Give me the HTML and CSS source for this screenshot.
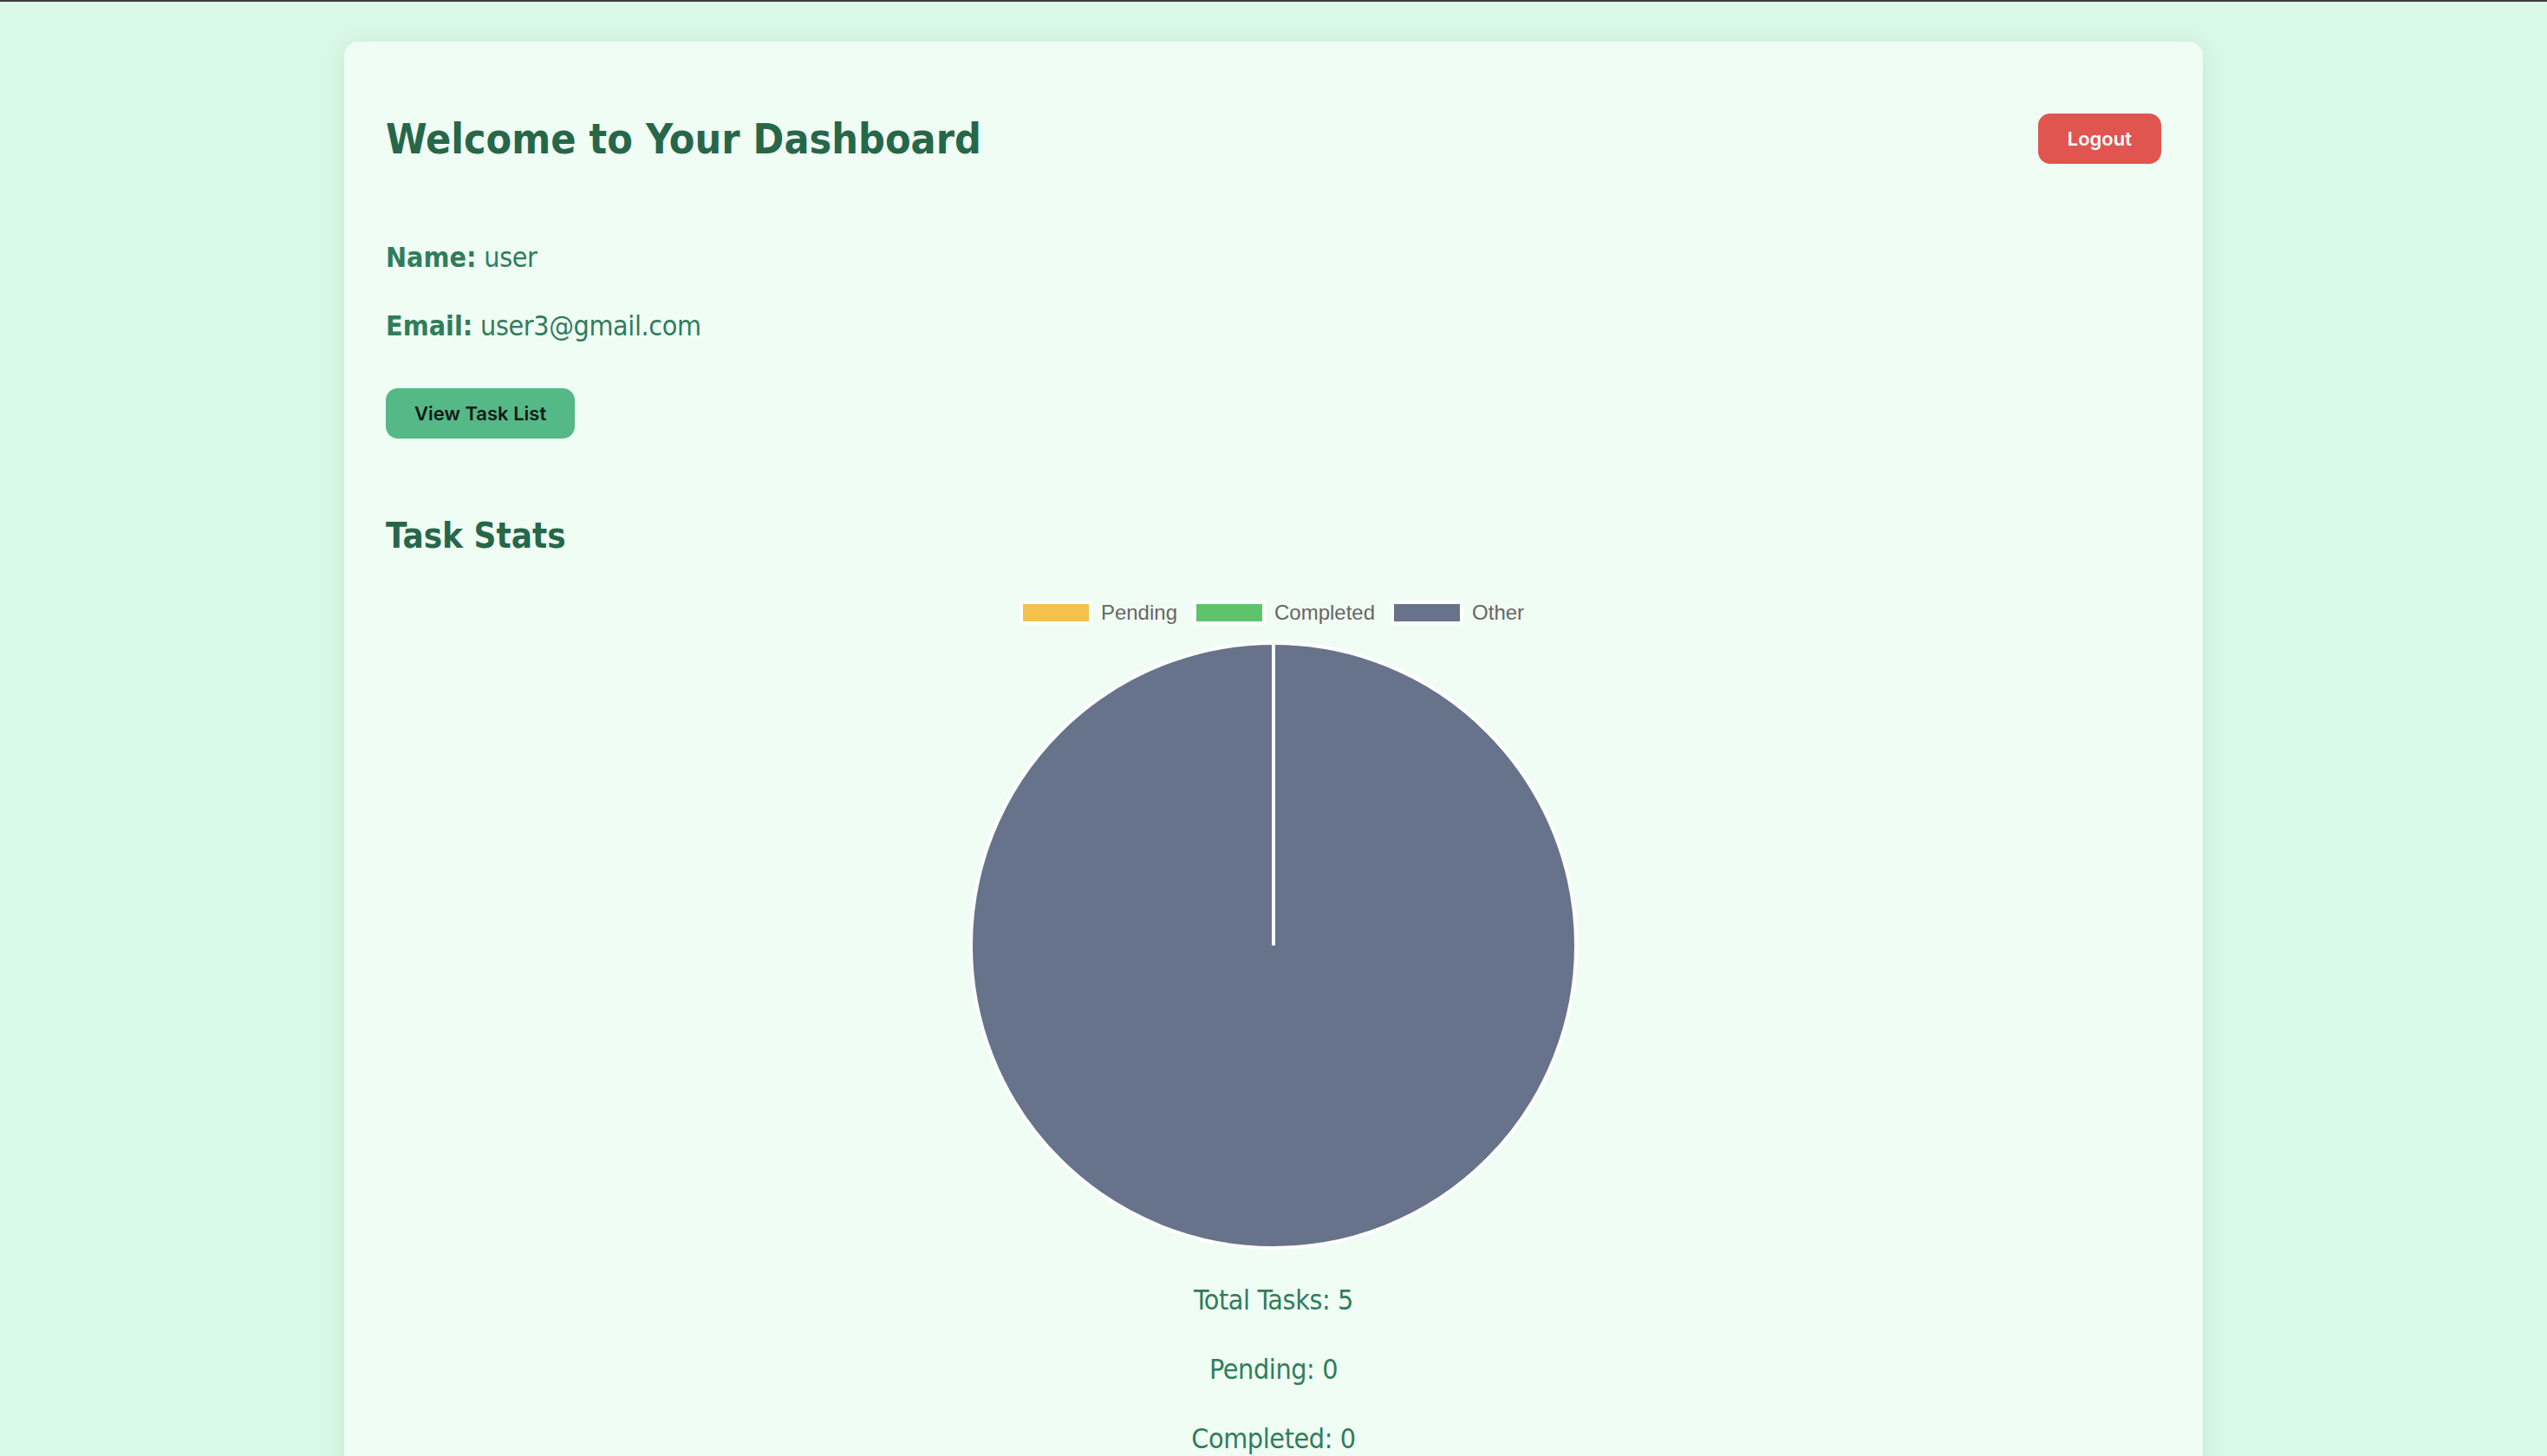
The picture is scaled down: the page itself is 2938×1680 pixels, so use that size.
FILE: index.html
```html
<!DOCTYPE html>
<html lang="en">
<head>
<meta charset="utf-8">
<title>Dashboard</title>
<link rel="stylesheet" href="styles.css">
</head>
<body>
<main class="card">
  <header class="header">
    <h2 class="title">Welcome to Your Dashboard</h2>
    <button class="btn btn-logout">Logout</button>
  </header>
  <p class="info"><strong>Name:</strong> user</p>
  <p class="info"><strong>Email:</strong> user3@gmail.com</p>
  <div class="actions">
    <button class="btn btn-tasks">View Task List</button>
  </div>
  <h3 class="subtitle">Task Stats</h3>
  <section class="chart">
    <div class="legend">
      <div class="legend-item"><span class="swatch swatch-pending"></span><span>Pending</span></div>
      <div class="legend-item"><span class="swatch swatch-completed"></span><span>Completed</span></div>
      <div class="legend-item"><span class="swatch swatch-other"></span><span>Other</span></div>
    </div>
    <svg class="pie" width="704" height="704" viewBox="0 0 704 704">
      <circle cx="352" cy="352" r="349" fill="#67738a" stroke="#ffffff" stroke-width="4"/>
      <line x1="352" y1="352" x2="352" y2="3" stroke="#ffffff" stroke-width="4"/>
    </svg>
  </section>
  <div class="stats">
    <p class="stat">Total Tasks: 5</p>
    <p class="stat">Pending: 0</p>
    <p class="stat">Completed: 0</p>
  </div>
</main>
</body>
</html>
```
FILE: styles.css
```css
html, body {
  margin: 0;
  padding: 0;
}

body {
  background: #daf8e6;
  border-top: 2px solid #3d3d3d;
  font-family: "DejaVu Sans Condensed", "DejaVu Sans", sans-serif;
  color: #2f7d5b;
  min-height: 1678px;
}

.card {
  width: 2144px;
  box-sizing: border-box;
  margin: 46px auto 0;
  padding: 48px;
  background: #f0fdf4;
  border-radius: 16px;
  box-shadow: 0 4px 24px rgba(40, 110, 80, 0.12);
  min-height: 1700px;
}

.header {
  display: flex;
  justify-content: space-between;
  align-items: center;
  padding: 28px 0;
}

.title {
  margin: 0;
  font-size: 48px;
  line-height: 72px;
  font-weight: bold;
  color: #276749;
}

.btn {
  border: none;
  cursor: pointer;
  font-family: Inter, "Noto Sans", sans-serif;
  font-size: 22px;
  font-weight: 600;
  line-height: 26px;
  padding: 16px 33px;
  border-radius: 14px;
}

.btn-logout {
  background: #e05550;
  color: #ffffff;
  padding-left: 34px;
  padding-right: 34px;
}

.btn-tasks {
  background: #55b887;
  color: #111a15;
}

.info {
  margin: 49px 0 0;
  font-size: 32px;
  line-height: 48px;
  letter-spacing: -0.4px;
}

.info + .info {
  margin-top: 31px;
}

.info strong {
  font-weight: bold;
  letter-spacing: 0;
}

.actions {
  margin-top: 48px;
  display: flex;
}

.subtitle {
  margin: 88px 0 0;
  font-size: 40px;
  line-height: 48px;
  font-weight: bold;
  color: #276749;
}

.chart {
  display: flex;
  flex-direction: column;
  align-items: center;
}

.legend {
  margin-top: 51px;
  display: flex;
  align-items: center;
  gap: 18px;
  font-family: "Liberation Sans", Arial, sans-serif;
  font-size: 24px;
  line-height: 28px;
  color: #666666;
  transform: translateX(-2px);
}

.legend-item {
  display: flex;
  align-items: center;
  gap: 10px;
}

.swatch {
  display: block;
  width: 76px;
  height: 20px;
  border: 4px solid #ffffff;
}

.swatch-pending { background: #f4c24c; }
.swatch-completed { background: #5ec46c; }
.swatch-other { background: #67738a; }

.pie {
  display: block;
  margin-top: 18px;
}

.stats {
  margin-top: 33px;
  text-align: center;
}

.stat {
  margin: 0 0 32px;
  font-size: 32px;
  line-height: 48px;
  letter-spacing: -0.4px;
}
```
